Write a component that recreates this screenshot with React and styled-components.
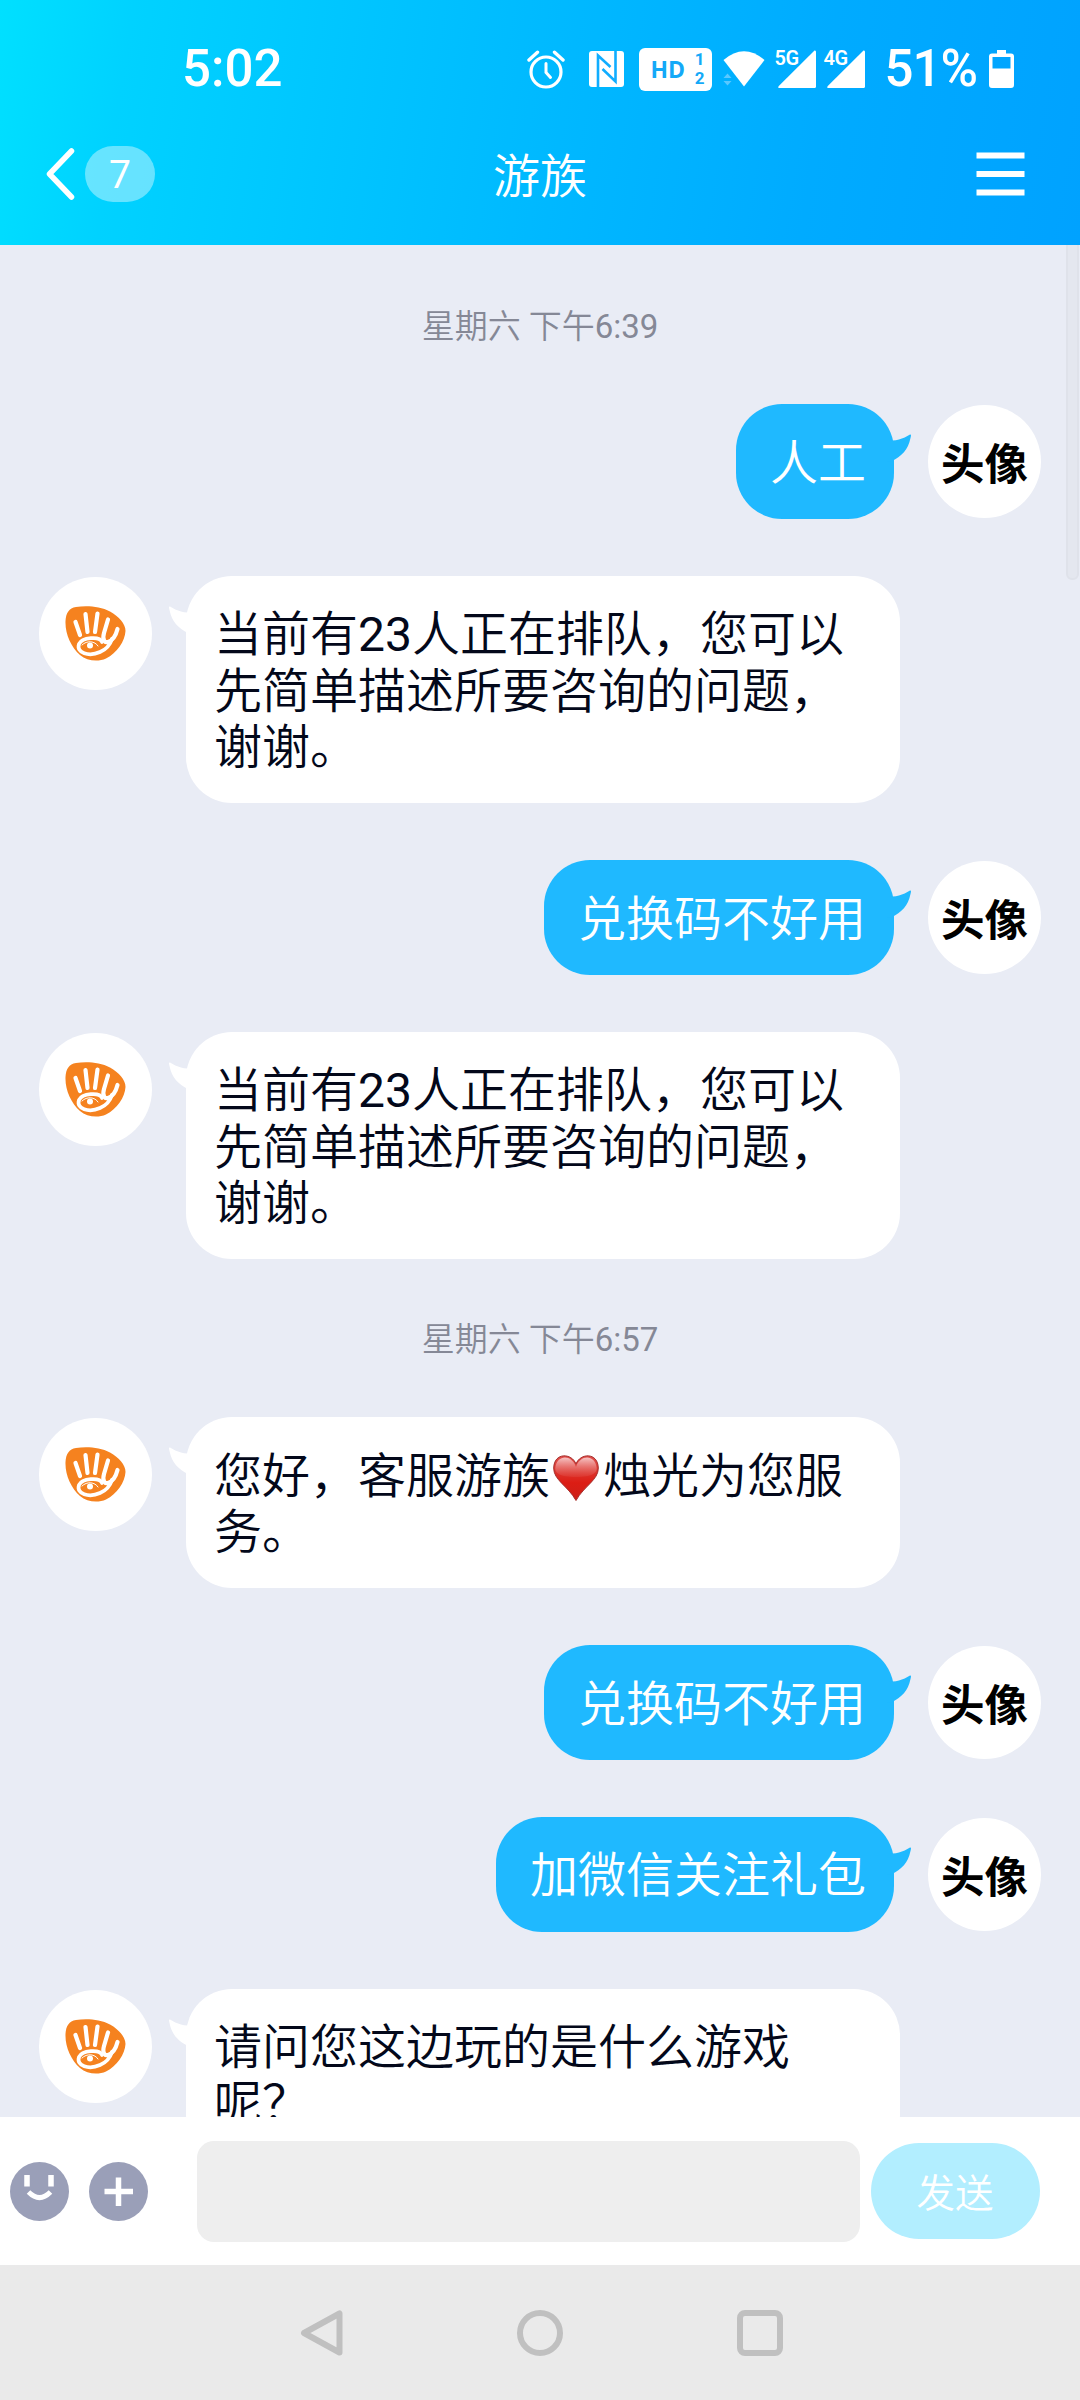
import React from "react";
import styled, { createGlobalStyle } from "styled-components";

const GlobalStyle = createGlobalStyle`
  * { box-sizing: border-box; }
  body {
    margin: 0;
    font-family: Roboto, "Noto Sans CJK SC", sans-serif;
    text-spacing-trim: space-all;
  }
`;

const Screen = styled.div`
  width: 1080px;
  height: 2400px;
  display: flex;
  flex-direction: column;
  overflow: hidden;
  background: #e9ecf5;
`;

const Header = styled.header`
  height: 245px;
  flex: none;
  color: #fff;
  background: linear-gradient(99deg, #00e0ff 0%, #00d2ff 12%, #00c5ff 32%, #00b8ff 52%, #00abff 75%, #00a2ff 100%);
`;

const StatusBar = styled.div`
  height: 138px;
  padding: 0 66px 0 182px;
  display: flex;
  align-items: center;
  justify-content: space-between;
`;

const StatusText = styled.span`
  font-size: 51px;
  font-weight: 500;
  line-height: 60px;
  margin-left: ${(p) => p.$ml || 0}px;
  letter-spacing: ${(p) => p.$spacing || 0}px;
`;

const StatusIcons = styled.div`
  display: flex;
  align-items: center;
`;

const Icon = styled.svg`
  display: block;
  flex: none;
  width: ${(p) => p.$w}px;
  height: ${(p) => p.$h}px;
  margin-left: ${(p) => p.$ml || 0}px;
`;

const HdBadge = styled.span`
  width: 73px;
  height: 43px;
  margin-left: 15px;
  padding: 0 8px 0 11px;
  display: flex;
  align-items: center;
  justify-content: space-between;
  border-radius: 6px;
  background: #fff;
  color: #14a9f8;
  font: 700 23px/43px "Open Sans", sans-serif;
`;

const HdSims = styled.span`
  display: flex;
  flex-direction: column;
  font-family: Roboto, sans-serif;
  font-size: 17px;
  line-height: 19px;
`;

const Signal = styled.span`
  position: relative;
  width: 42px;
  height: 38px;
  margin-left: ${(p) => p.$ml}px;
  display: flex;
  justify-content: flex-end;
`;

const SignalLabel = styled.span`
  position: absolute;
  left: 0;
  top: -2px;
  font-size: 20px;
  font-weight: 600;
  line-height: 20px;
  letter-spacing: -0.5px;
`;

const TitleBar = styled.div`
  height: 72px;
  padding: 0 46px;
  display: grid;
  grid-template-columns: 1fr auto 1fr;
  align-items: center;
`;

const BackGroup = styled.div`
  display: flex;
  align-items: center;
  gap: 10px;
`;

const Unread = styled.span`
  width: 70px;
  height: 56px;
  border-radius: 28px;
  background: rgba(255, 255, 255, 0.4);
  text-align: center;
  font-size: 39px;
  font-weight: 400;
  line-height: 59px;
`;

const Title = styled.h1`
  margin: 6px 0 0;
  font-size: 47px;
  font-weight: 350;
  line-height: 60px;
`;

const MenuButton = styled.span`
  justify-self: end;
  margin-right: 9px;
`;

const Chat = styled.main`
  height: 1872px;
  flex: none;
  position: relative;
  overflow: hidden;
  padding-top: 59px;
`;

const ScrollThumb = styled.span`
  position: absolute;
  top: -10px;
  right: 1px;
  width: 13px;
  height: 345px;
  border: 2px solid #dfe2ea;
  border-radius: 6px;
  background: #e4e7ef;
`;

const Digits = styled.span`
  font-weight: 400;
`;

const Timestamp = styled.div`
  height: 45px;
  margin-bottom: 55px;
  text-align: center;
  color: #858896;
  font-size: 33px;
  font-weight: 350;
  line-height: 45px;
`;

const Row = styled.div`
  display: flex;
  flex-direction: ${(p) => (p.$mine ? "row-reverse" : "row")};
  align-items: flex-start;
  gap: 34px;
  padding: 0 39px;
  margin-bottom: ${(p) => p.$gap || 57}px;
`;

const Avatar = styled.div`
  width: 113px;
  height: 113px;
  flex: none;
  margin-top: 1px;
  border-radius: 50%;
  background: #fff;
  display: flex;
  align-items: center;
  justify-content: center;
  color: #000;
  font-size: 43.5px;
  font-weight: 700;
`;

const Bubble = styled.div`
  position: relative;
  width: ${(p) => (p.$mine ? "auto" : "714px")};
  padding: ${(p) => (p.$mine ? "31.5px 28px 27px 34px" : "31.5px 34px 27px 28px")};
  border-radius: 46px;
  background: ${(p) => (p.$mine ? "#1fb9ff" : "#fff")};
  color: ${(p) => (p.$mine ? "#fff" : "#03081a")};
  font-size: 48px;
  font-weight: 350;
  line-height: 56.25px;
  white-space: pre;
`;

const Tail = styled.svg`
  position: absolute;
  top: 29px;
  width: 26px;
  height: 30px;
  ${(p) => (p.$mine ? "right: -17px;" : "left: -17px; transform: scaleX(-1);")}
`;

const HeartIcon = styled.svg`
  width: 46px;
  height: 47px;
  margin: 0 4px 0 3px;
  vertical-align: -8px;
`;

const Composer = styled.footer`
  height: 148px;
  flex: none;
  padding: 0 40px 0 10px;
  display: flex;
  align-items: center;
  background: #fff;
`;

const InputBox = styled.div`
  width: 663px;
  height: 101px;
  margin-left: 49px;
  border-radius: 17px;
  background: #eee;
`;

const SendButton = styled.button`
  width: 169px;
  height: 96px;
  margin-left: 11px;
  padding: 0 1px 2px 0;
  border: 0;
  border-radius: 48px;
  background: #b2eeff;
  color: #fff;
  font-family: Roboto, "Noto Sans CJK SC", sans-serif;
  font-size: 38.5px;
  font-weight: 350;
`;

const NavBar = styled.nav`
  height: 135px;
  flex: none;
  padding: 0 297px;
  display: flex;
  align-items: center;
  justify-content: space-between;
  background: #eaeaea;
`;

const SignalIcon = ({ label, ml }) => (
  <Signal $ml={ml}>
    <SignalLabel>{label}</SignalLabel>
    <Icon $w={38} $h={38} viewBox="0 0 38 38">
      <path d="M36.5 0.5Q38 0 38 2V36.5Q38 38 36.5 38H1Q-0.5 37.5 0.8 36Z" fill="#fff" />
    </Icon>
  </Signal>
);

const AlarmIcon = () => (
  <Icon $w={38} $h={40} viewBox="0 0 38 40" fill="none" stroke="#fff">
    <circle cx="19" cy="23" r="15" strokeWidth="3.2" />
    <path d="M2 11L10.5 3.2M36 11L27.5 3.2" strokeWidth="3.4" strokeLinecap="round" />
    <path d="M19 14.5V23.5L23.5 28.5" strokeWidth="3" strokeLinecap="round" />
  </Icon>
);

const NfcIcon = () => (
  <Icon $w={35} $h={36} $ml={24} viewBox="0 0 35 36">
    <rect width="35" height="36" rx="3" fill="#fff" />
    <path d="M9 36V4.500L21.500 16M26.500 0V30.500L13.500 18" fill="none" stroke="#10adff" strokeWidth="2.600" />
  </Icon>
);

const WifiIcon = () => (
  <Icon $w={42} $h={36} $ml={11} viewBox="0 0 42 36">
    <path d="M0.500 9Q21-8.500 41.500 9L21 35.500Z" fill="#fff" />
    <path d="M0.500 27L4.500 22.500L8.500 27ZM0.500 30L4.500 34.500L8.500 30Z" fill="#5ac8ff" />
  </Icon>
);

const BatteryIcon = () => (
  <Icon $w={25} $h={38} $ml={12} viewBox="0 0 25 38">
    <path fillRule="evenodd" d="M8 0H17V3.500H22Q25 3.500 25 6.500V35Q25 38 22 38H3Q0 38 0 35V6.500Q0 3.500 3 3.500H8ZM3.500 7V18.500H21.500V7Z" fill="#fff" />
  </Icon>
);

const HandLogo = () => (
  <Icon $w={61} $h={55} viewBox="0 0 61 55">
    <path d="M11 1C21-0.500 35 0 45 5.500C54 10.500 60.500 18 60.500 25C60 35 52 47 41 52.500C33 56 22 55 15 49C6 41 0 28 0.500 15C1 7 4 2 11 1Z" fill="#f5821f" />
    <g fill="none" stroke="#fff" strokeLinecap="round" strokeLinejoin="round">
      <path d="M10.500 16L15 29M20.500 8L22.500 26M32.500 7.500L30 26M43 13.500L39 27C37 34 40 37 43 36C49 34 51 29 52.500 23" strokeWidth="4.200" />
      <path d="M37 36C35 30 17 31 14 38C11 47 24 51 35 46C40 44 45 39 47 33" strokeWidth="3.800" />
      <path d="M17 39C22 34 30 35 33 40" strokeWidth="1" />
    </g>
    <circle cx="25" cy="39.500" r="3" fill="#fff" />
  </Icon>
);

const Heart = () => (
  <HeartIcon viewBox="0 0 46 47">
    <defs>
      <linearGradient id="heartFill" x1="0" y1="0" x2="0" y2="1">
        <stop offset="0" stopColor="#e0504c" />
        <stop offset="0.300" stopColor="#dc3a33" />
        <stop offset="0.600" stopColor="#dc1d14" />
        <stop offset="1" stopColor="#cc2018" />
      </linearGradient>
      <linearGradient id="heartShine" x1="0" y1="0" x2="0" y2="1">
        <stop offset="0" stopColor="#f6c4c4" />
        <stop offset="1" stopColor="#e2504a" stopOpacity="0.300" />
      </linearGradient>
    </defs>
    <path d="M23 10C19-1 1-2 0.700 14C0.500 26 15 32 23 46.500C31 32 45.500 26 45.300 14C45-2 27-1 23 10Z" fill="url(#heartFill)" stroke="#a5302e" strokeWidth="1" />
    <path d="M23 13C19 0.500 4 0 2.300 14C2 19 7 23 23 23C39 23 44 19 43.700 14C42 0 27 0.500 23 13Z" fill="url(#heartShine)" />
  </HeartIcon>
);

const Message = ({ mine, gap, children }) => (
  <Row $mine={mine} $gap={gap}>
    <Avatar>{mine ? "头像" : <HandLogo />}</Avatar>
    <Bubble $mine={mine}>
      <Tail $mine={mine} viewBox="0 0 26 30">
        <path d="M0 8C11 8 18 6 25 1.500C26.500 1.500 26 3 25.500 5C23 17 17 23 6 28.500L0 28Z" fill={mine ? "#1fb9ff" : "#fff"} />
      </Tail>
      {children}
    </Bubble>
  </Row>
);

const QueueNotice = ({ gap }) => (
  <Message gap={gap}>
    当前有<Digits>23</Digits>人正在排队，您可以{"\n"}先简单描述所要咨询的问题，{"\n"}谢谢。
  </Message>
);

export default function App() {
  return (
    <Screen>
      <GlobalStyle />
      <Header>
        <StatusBar>
          <StatusText>5:02</StatusText>
          <StatusIcons>
            <AlarmIcon />
            <NfcIcon />
            <HdBadge>
              HD
              <HdSims>
                <span>1</span>
                <span>2</span>
              </HdSims>
            </HdBadge>
            <WifiIcon />
            <SignalIcon label="5G" ml={9} />
            <SignalIcon label="4G" ml={7} />
            <StatusText $ml={19} $spacing={-1}>51%</StatusText>
            <BatteryIcon />
          </StatusIcons>
        </StatusBar>
        <TitleBar>
          <BackGroup>
            <Icon $w={29} $h={52} viewBox="0 0 29 52">
              <path d="M25.500 3L3.500 26L25.500 49" fill="none" stroke="#fff" strokeWidth="5.500" strokeLinecap="round" strokeLinejoin="round" />
            </Icon>
            <Unread>7</Unread>
          </BackGroup>
          <Title>游族</Title>
          <MenuButton>
            <Icon $w={49} $h={44} viewBox="0 0 49 44">
              <path d="M0.500 3.500H48.500M0.500 22H48.500M0.500 40.500H48.500" stroke="#fff" strokeWidth="6" />
            </Icon>
          </MenuButton>
        </TitleBar>
      </Header>

      <Chat>
        <ScrollThumb />
        <Timestamp>
          星期六 下午<Digits>6:39</Digits>
        </Timestamp>
        <Message mine>人工</Message>
        <QueueNotice />
        <Message mine>兑换码不好用</Message>
        <QueueNotice gap={58} />
        <Timestamp>
          星期六 下午<Digits>6:57</Digits>
        </Timestamp>
        <Message>
          您好，客服游族
          <Heart />
          烛光为您服{"\n"}务。
        </Message>
        <Message mine>兑换码不好用</Message>
        <Message mine>加微信关注礼包</Message>
        <Message>请问您这边玩的是什么游戏{"\n"}呢？</Message>
      </Chat>

      <Composer>
        <Icon $w={59} $h={59} viewBox="0 0 59 59">
          <circle cx="29.500" cy="29.500" r="29.500" fill="#9a9fb8" />
          <path d="M17 13V24.500M41 13V24.500" stroke="#fff" strokeWidth="5.500" />
          <path d="M18.500 30Q29.500 41 40.500 30" fill="none" stroke="#fff" strokeWidth="5" />
        </Icon>
        <Icon $w={59} $h={59} $ml={20} viewBox="0 0 59 59">
          <circle cx="29.500" cy="29.500" r="29.500" fill="#9a9fb8" />
          <path d="M15.500 29.500H44M29.500 15.500V44" stroke="#fff" strokeWidth="5.500" />
        </Icon>
        <InputBox />
        <SendButton>发送</SendButton>
      </Composer>

      <NavBar>
        <Icon $w={46} $h={48} viewBox="0 0 46 48" fill="none" stroke="#c0c0c0">
          <path d="M42.500 4.500V43.500L7 24Z" strokeWidth="6" strokeLinejoin="round" />
        </Icon>
        <Icon $w={46} $h={46} viewBox="0 0 46 46" fill="none" stroke="#c0c0c0">
          <circle cx="23" cy="23" r="20" strokeWidth="6" />
        </Icon>
        <Icon $w={46} $h={46} viewBox="0 0 46 46" fill="none" stroke="#c0c0c0">
          <rect x="3" y="3" width="40" height="40" rx="5" strokeWidth="6" />
        </Icon>
      </NavBar>
    </Screen>
  );
}
